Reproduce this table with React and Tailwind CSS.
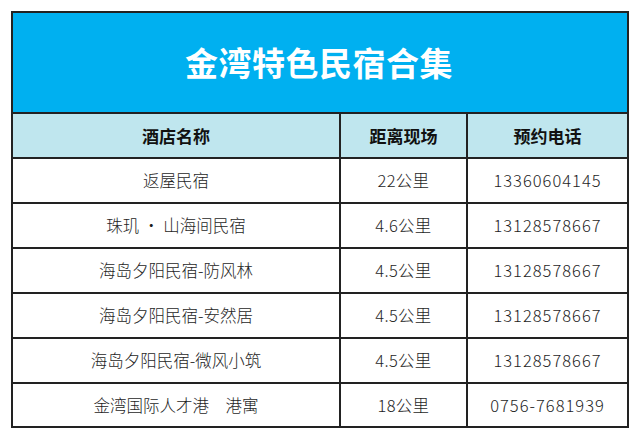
import React from "react";

const rows = [
  { name: "返屋民宿", dist: "22公里", phone: "13360604145" },
  { name: "珠玑 · 山海间民宿", dist: "4.6公里", phone: "13128578667" },
  { name: "海岛夕阳民宿-防风林", dist: "4.5公里", phone: "13128578667" },
  { name: "海岛夕阳民宿-安然居", dist: "4.5公里", phone: "13128578667" },
  { name: "海岛夕阳民宿-微风小筑", dist: "4.5公里", phone: "13128578667" },
  { name: "金湾国际人才港\u3000港寓", dist: "18公里", phone: "0756-7681939" },
];

const font = { fontFamily: '"Noto Sans CJK SC", "Noto Sans", sans-serif' };

export default function App() {
  return (
    <div className="w-[640px] h-[442px] bg-white pt-[11px] pl-[11px]" style={font}>
      <div className="w-[618px] border-2 border-[#222]">
        {/* title */}
        <div className="h-[101px] bg-[#00b0f0] border-b-2 border-[#222] flex items-center justify-center">
          <h1 className="text-white text-[33px] font-bold tracking-[0.5px] leading-none pr-[2px]">
            金湾特色民宿合集
          </h1>
        </div>

        {/* header */}
        <div className="flex h-[45px] bg-[#bfe6ee] border-b-2 border-[#222] text-[17px] font-bold text-[#111]">
          <div className="w-[328px] border-r-2 border-[#222] flex items-center justify-center">酒店名称</div>
          <div className="w-[127px] border-r-2 border-[#222] flex items-center justify-center">距离现场</div>
          <div className="flex-1 flex items-center justify-center">预约电话</div>
        </div>

        {rows.map((r, i) => (
          <div
            key={i}
            className={`flex text-[16.5px] font-light text-[#1e1e1e] ${
              i < rows.length - 1 ? "h-[45px] border-b-2 border-[#222]" : "h-[42px]"
            }`}
          >
            <div className="w-[328px] border-r-2 border-[#222] flex items-center justify-center whitespace-pre">
              {r.name}
            </div>
            <div className="w-[127px] border-r-2 border-[#222] flex items-center justify-center tracking-[0.3px]">
              {r.dist}
            </div>
            <div className="flex-1 flex items-center justify-center tracking-[1px]">
              {r.phone}
            </div>
          </div>
        ))}
      </div>
    </div>
  );
}
